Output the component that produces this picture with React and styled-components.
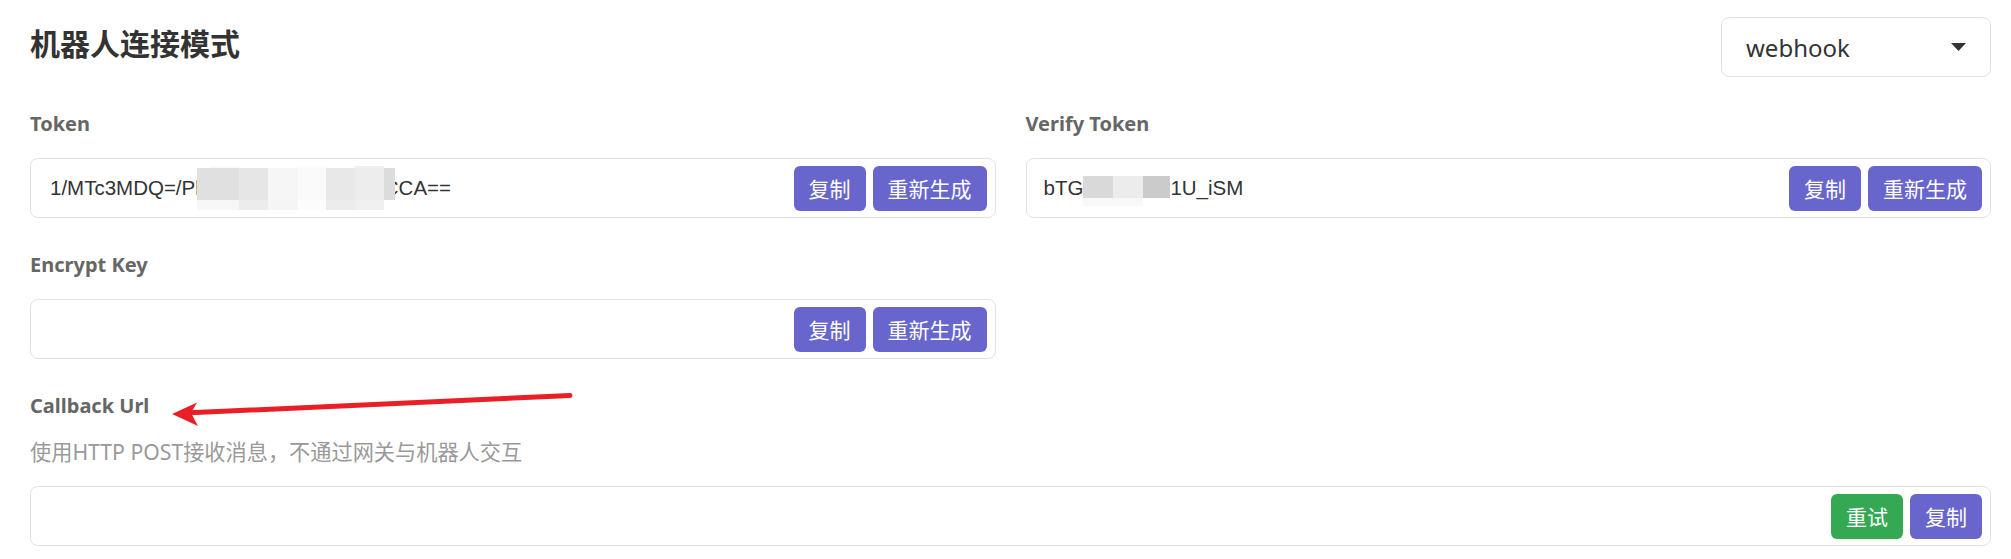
import React from "react"
import styled, { createGlobalStyle } from "styled-components"

const GlobalStyle = createGlobalStyle`
  body {
    margin: 0;
    background: #fff;
    font-family: "Noto Sans", "Noto Sans CJK SC", sans-serif;
    color: #333;
  }
`

const Page = styled.div`
  position: relative;
  padding: 17px 20px 0 30px;
`

const Header = styled.div`
  display: flex;
  justify-content: space-between;
  align-items: flex-start;
  margin-bottom: 35px;
`

const Title = styled.h1`
  margin: 0;
  font-family: "Noto Sans CJK SC", sans-serif;
  font-size: 30px;
  font-weight: 700;
  line-height: 50px;
  color: #333;
`

const Select = styled.div`
  box-sizing: border-box;
  width: 270px;
  height: 60px;
  display: flex;
  align-items: center;
  justify-content: space-between;
  padding: 0 24px;
  border: 1px solid #e3e3e3;
  border-radius: 8px;
  font-size: 24px;
  color: #333;
`

const Fields = styled.div`
  display: grid;
  grid-template-columns: 1fr 1fr;
  column-gap: 30px;
  row-gap: 35px;
`

const Field = styled.div`
  display: flex;
  flex-direction: column;
  grid-column: ${(p) => (p.$wide ? "1 / -1" : "auto")};
`

const Label = styled.div`
  font-size: 20px;
  font-weight: 700;
  line-height: 24px;
  color: #666;
  margin-bottom: ${(p) => (p.$tight ? "20px" : "22px")};
`

const Hint = styled.div`
  font-family: "Noto Sans", "Noto Sans CJK SC", sans-serif;
  font-size: 21.2px;
  line-height: 28px;
  color: #999;
  margin-bottom: 20px;
`

const InputBox = styled.div`
  box-sizing: border-box;
  height: 60px;
  display: flex;
  align-items: center;
  gap: 7px;
  padding: 0 8px 0 ${(p) => p.$pad || "17px"};
  border: 1px solid #e3e3e3;
  border-radius: 8px;
`

const Value = styled.div`
  flex: 1;
  display: flex;
  align-items: center;
  min-width: 0;
  overflow: hidden;
  white-space: pre;
  font-family: "Liberation Sans", Arial, sans-serif;
  font-size: 20.5px;
  color: #333;
`

const Mosaic = styled.span`
  position: relative;
  z-index: 1;
  display: grid;
  flex: none;
  grid-template-columns: ${(p) => p.$cols};
  grid-template-rows: ${(p) => p.$rows};
  margin: ${(p) => p.$margin};
`

const Cell = styled.span`
  background: ${(p) => p.$c};
`

const Button = styled.button`
  height: 45px;
  padding: 0 15px;
  border: none;
  border-radius: 6px;
  background: ${(p) => (p.$green ? "#35a853" : "#6866cc")};
  color: #fff;
  font-family: "Noto Sans CJK SC", sans-serif;
  font-size: 21px;
  line-height: 45px;
  cursor: pointer;
`

const Arrow = styled.svg`
  position: absolute;
  left: 165px;
  top: 385px;
  width: 415px;
  height: 45px;
  pointer-events: none;
`

const tokenCells = [
  "#fff", "#fafafa", "#fff", "#fff", "#fcfcfc", "#fff", "#f0f0f0", "#fff",
  "#e0e0e0", "#e0e0e0", "#e6e6e6", "#f6f6f6", "#fafafa", "#e8e8e8", "#ededed", "#dcdcdc",
  "#f7f7f7", "#f7f7f7", "#ececec", "#f5f5f5", "#fcfcfc", "#ececec", "#f0f0f0", "#fff",
]

const verifyCells = [
  "#d9d9d9", "#ececec", "#cbcbcb",
  "#f8f8f8", "#f8f8f8", "#fff",
]

function Caret() {
  return (
    <svg width="15" height="8" viewBox="0 0 15 8">
      <path d="M0 0h15L7.5 8z" fill="#333" />
    </svg>
  )
}

function KeyField({ label, children, actions, pad }) {
  return (
    <Field>
      <Label>{label}</Label>
      <InputBox $pad={pad}>
        <Value>{children}</Value>
        {actions}
      </InputBox>
    </Field>
  )
}

const regen = (
  <>
    <Button>复制</Button>
    <Button>重新生成</Button>
  </>
)

export default function App() {
  return (
    <>
      <GlobalStyle />
      <Page>
        <Header>
          <Title>机器人连接模式</Title>
          <Select>
            <span>webhook</span>
            <Caret />
          </Select>
        </Header>

        <Fields>
          <KeyField label="Token" actions={regen} pad="19px">
            <span>1/MTc3MDQ=/Pl</span>
            <Mosaic
              $cols="13px 29px 29px 30px 28px 29px 29px 11px"
              $rows="5px 32px 10px"
              $margin="-3px -11px 0 -3px"
            >
              {tokenCells.map((c, i) => (
                <Cell key={i} $c={c} />
              ))}
            </Mosaic>
            <span>CCA==</span>
          </KeyField>

          <KeyField label="Verify Token" actions={regen}>
            <span>bTG</span>
            <Mosaic $cols="30px 30px 27px" $rows="22px 8px" $margin="6px 0 0 0">
              {verifyCells.map((c, i) => (
                <Cell key={i} $c={c} />
              ))}
            </Mosaic>
            <span>1U_iSM</span>
          </KeyField>

          <KeyField label="Encrypt Key" actions={regen} />
          <div />

          <Field $wide>
            <Label $tight>Callback Url</Label>
            <Hint>使用HTTP POST接收消息，不通过网关与机器人交互</Hint>
            <InputBox>
              <Value />
              <Button $green>重试</Button>
              <Button>复制</Button>
            </InputBox>
          </Field>
        </Fields>

        <Arrow viewBox="165 385 415 45">
          <path
            d="M190 412.8 L570 395.5"
            stroke="#e81f27"
            strokeWidth="5"
            strokeLinecap="round"
            fill="none"
          />
          <path d="M172 414 L197 402.5 L191 413 L198 426 Z" fill="#e81f27" />
        </Arrow>
      </Page>
    </>
  )
}
